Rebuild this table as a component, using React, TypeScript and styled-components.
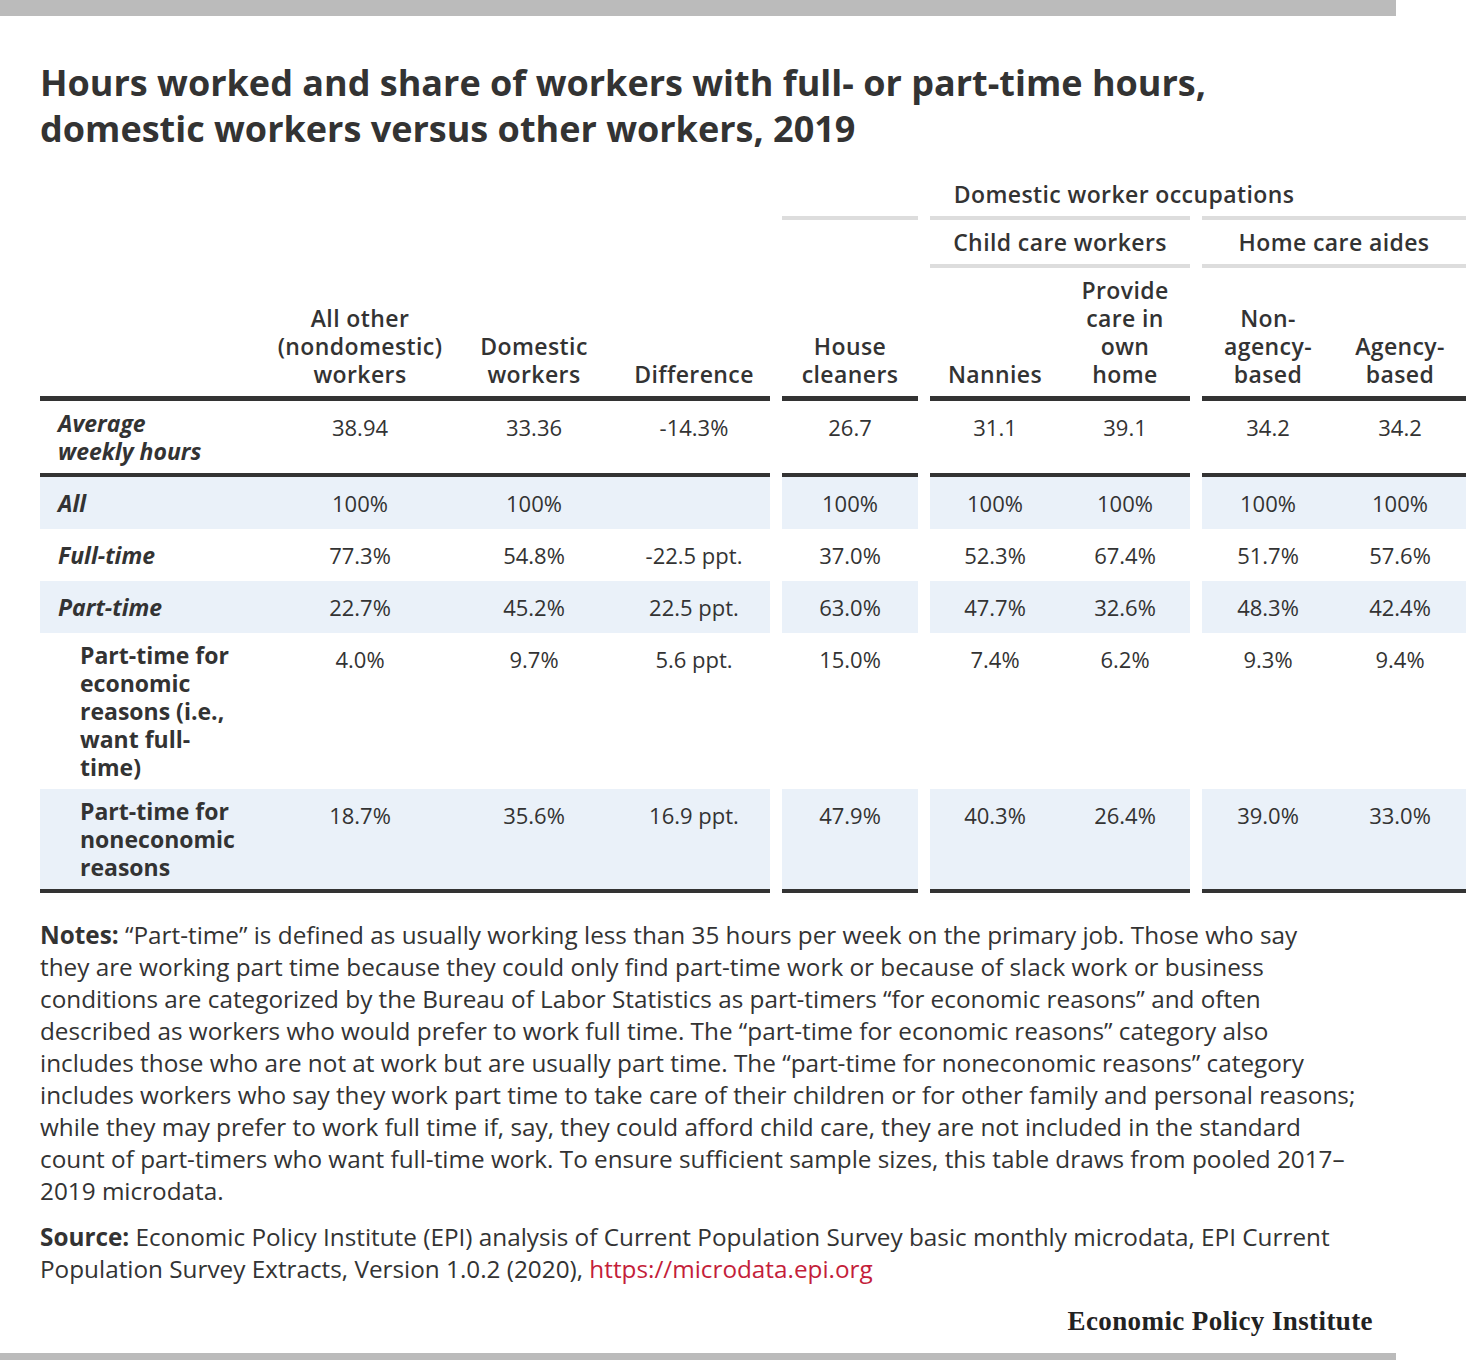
import React from 'react';
import styled, { createGlobalStyle } from 'styled-components';

const GlobalStyle = createGlobalStyle`
  html, body {
    margin: 0;
    padding: 0;
    background: #fff;
  }
  body {
    font-family: "Open Sans", "Liberation Sans", sans-serif;
    color: #333;
  }
`;

// label | 3 cols | gap | house cleaners | gap | 2 child care | gap | 2 home care
const COLS = '230px 180px 168px 152px 12px 136px 12px 130px 130px 12px 132px 132px';

const Page = styled.div`
  width: 1466px;
  height: 1360px;
  display: flex;
  flex-direction: column;
`;

const Bar = styled.div<{ $width: number; $height: number }>`
  flex: none;
  width: ${p => p.$width}px;
  height: ${p => p.$height}px;
  background: #bbb;
`;

const Content = styled.div`
  flex: 1;
  display: flex;
  flex-direction: column;
  padding: 44px 0 0 40px;
`;

const Title = styled.h1`
  margin: 0;
  width: 1240px;
  font-size: 36px;
  line-height: 46px;
  font-weight: 700;
  color: #333;
`;

const Grid = styled.div`
  display: grid;
  grid-template-columns: ${COLS};
  margin-top: 20px;
  font-size: 22px;
  line-height: 28px;
  color: #333;
`;

const Blank = styled.div<{ $span?: number }>`
  grid-column: span ${p => p.$span || 1};
`;

const GroupHead = styled.div<{ $span: number; $rule?: 'top' | 'both' }>`
  grid-column: span ${p => p.$span};
  padding: 8px 0;
  text-align: center;
  font-size: 23px;
  font-weight: 600;
  letter-spacing: 0.4px;
  border-top: ${p => (p.$rule ? '4px solid #ddd' : 'none')};
  border-bottom: ${p => (p.$rule === 'both' ? '4px solid #ddd' : 'none')};
`;

const ColHead = styled.div`
  display: flex;
  flex-direction: column;
  justify-content: flex-end;
  padding: 8px 2px;
  text-align: center;
  font-size: 23px;
  font-weight: 600;
  letter-spacing: 0.4px;
  border-bottom: 5px solid #333;
`;

const Label = styled.div<{ $indent: number; $shaded?: boolean; $ruled?: boolean; $italic?: boolean }>`
  display: flex;
  align-items: center;
  padding: 8px 0 8px ${p => p.$indent}px;
  font-size: 23px;
  font-weight: 700;
  font-style: ${p => (p.$italic ? 'italic' : 'normal')};
  background: ${p => (p.$shaded ? '#eaf1f9' : 'transparent')};
  border-bottom: ${p => (p.$ruled ? '4px solid #333' : 'none')};
`;

const LabelText = styled.span`
  max-width: 160px;
`;

const Cell = styled.div<{ $shaded?: boolean; $ruled?: boolean }>`
  padding: 12px 0;
  text-align: center;
  background: ${p => (p.$shaded ? '#eaf1f9' : 'transparent')};
  border-bottom: ${p => (p.$ruled ? '4px solid #333' : 'none')};
`;

const Notes = styled.p`
  margin: 26px 0 0;
  font-size: 24.3px;
  line-height: 32px;
  white-space: nowrap;
  color: #333;
`;

const SourceNote = styled(Notes)`
  margin-top: 14px;
`;

const Strong = styled.span`
  font-weight: 700;
`;

const Link = styled.a`
  color: #c41e3a;
  text-decoration: none;
`;

const Footer = styled.div`
  display: flex;
  justify-content: flex-end;
  width: 1333px;
  margin-top: 20px;
`;

const Logo = styled.div`
  font-family: "Liberation Serif", "DejaVu Serif", serif;
  font-weight: 700;
  font-size: 27px;
  letter-spacing: 0.4px;
  line-height: 32px;
  color: #222;
`;

const BottomBar = styled(Bar)`
  margin-top: auto;
`;

type Row = {
  label: string;
  indent: number;
  italic?: boolean;
  shaded?: boolean;
  ruled?: boolean;
  values: string[];
};

const heads: string[][] = [
  ['All other', '(nondomestic)', 'workers'],
  ['Domestic', 'workers'],
  ['Difference'],
  ['House', 'cleaners'],
  ['Nannies'],
  ['Provide', 'care in', 'own', 'home'],
  ['Non-', 'agency-', 'based'],
  ['Agency-', 'based'],
];

const rows: Row[] = [
  {
    label: 'Average weekly hours',
    indent: 18,
    italic: true,
    ruled: true,
    values: ['38.94', '33.36', '-14.3%', '26.7', '31.1', '39.1', '34.2', '34.2'],
  },
  {
    label: 'All',
    indent: 18,
    italic: true,
    shaded: true,
    values: ['100%', '100%', '', '100%', '100%', '100%', '100%', '100%'],
  },
  {
    label: 'Full-time',
    indent: 18,
    italic: true,
    values: ['77.3%', '54.8%', '-22.5 ppt.', '37.0%', '52.3%', '67.4%', '51.7%', '57.6%'],
  },
  {
    label: 'Part-time',
    indent: 18,
    italic: true,
    shaded: true,
    values: ['22.7%', '45.2%', '22.5 ppt.', '63.0%', '47.7%', '32.6%', '48.3%', '42.4%'],
  },
  {
    label: 'Part-time for economic reasons (i.e., want full-time)',
    indent: 40,
    values: ['4.0%', '9.7%', '5.6 ppt.', '15.0%', '7.4%', '6.2%', '9.3%', '9.4%'],
  },
  {
    label: 'Part-time for noneconomic reasons',
    indent: 40,
    shaded: true,
    ruled: true,
    values: ['18.7%', '35.6%', '16.9 ppt.', '47.9%', '40.3%', '26.4%', '39.0%', '33.0%'],
  },
];

// lines of the notes, broken where the published graphic breaks them
const noteLines = [
  ' “Part-time” is defined as usually working less than 35 hours per week on the primary job. Those who say',
  'they are working part time because they could only find part-time work or because of slack work or business',
  'conditions are categorized by the Bureau of Labor Statistics as part-timers “for economic reasons” and often',
  'described as workers who would prefer to work full time. The “part-time for economic reasons” category also',
  'includes those who are not at work but are usually part time. The “part-time for noneconomic reasons” category',
  'includes workers who say they work part time to take care of their children or for other family and personal reasons;',
  'while they may prefer to work full time if, say, they could afford child care, they are not included in the standard',
  'count of part-timers who want full-time work. To ensure sufficient sample sizes, this table draws from pooled 2017–',
  '2019 microdata.',
];

// value columns that are followed by a white gap column
const gapAfter = [2, 3, 5];

function HeadCell({ lines }: { lines: string[] }) {
  return (
    <ColHead>
      {lines.map((l, i) => (
        <span key={i}>{l}</span>
      ))}
    </ColHead>
  );
}

function DataRow({ row }: { row: Row }) {
  const { label, indent, italic, shaded, ruled, values } = row;
  return (
    <>
      <Label $indent={indent} $italic={italic} $shaded={shaded} $ruled={ruled}>
        <LabelText>{label}</LabelText>
      </Label>
      {values.map((v, i) => (
        <React.Fragment key={i}>
          <Cell $shaded={shaded} $ruled={ruled}>{v}</Cell>
          {gapAfter.includes(i) && <Blank />}
        </React.Fragment>
      ))}
    </>
  );
}

export default function App() {
  return (
    <Page>
      <GlobalStyle />
      <Bar $width={1396} $height={16} />
      <Content>
        <Title>
          Hours worked and share of workers with full- or part-time hours, domestic workers versus
          other workers, 2019
        </Title>

        <Grid>
          {/* header row 1 */}
          <Blank $span={5} />
          <GroupHead $span={7}>Domestic worker occupations</GroupHead>

          {/* header row 2 */}
          <Blank $span={5} />
          <GroupHead $span={1} $rule="top" />
          <Blank />
          <GroupHead $span={2} $rule="both">Child care workers</GroupHead>
          <Blank />
          <GroupHead $span={2} $rule="both">Home care aides</GroupHead>

          {/* header row 3 */}
          <ColHead />
          {heads.map((h, i) => (
            <React.Fragment key={i}>
              <HeadCell lines={h} />
              {gapAfter.includes(i) && <Blank />}
            </React.Fragment>
          ))}

          {rows.map(r => (
            <DataRow key={r.label} row={r} />
          ))}
        </Grid>

        <Notes>
          <Strong>Notes:</Strong>
          {noteLines.map((l, i) => (
            <React.Fragment key={i}>
              {i > 0 && <br />}
              {l}
            </React.Fragment>
          ))}
        </Notes>
        <SourceNote>
          <Strong>Source:</Strong> Economic Policy Institute (EPI) analysis of Current Population
          Survey basic monthly microdata, EPI Current
          <br />
          Population Survey Extracts, Version 1.0.2 (2020),{' '}
          <Link href="#">https://microdata.epi.org</Link>
        </SourceNote>

        <Footer>
          <Logo>Economic Policy Institute</Logo>
        </Footer>
      </Content>
      <BottomBar $width={1396} $height={7} />
    </Page>
  );
}
